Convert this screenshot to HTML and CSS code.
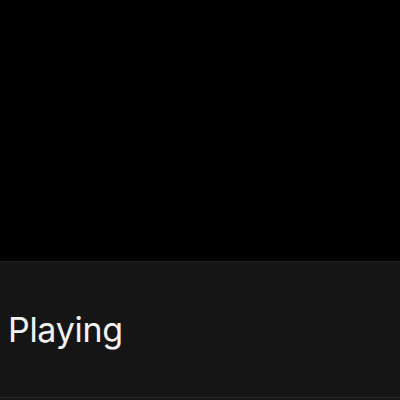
FILE: index.html
```html
<!DOCTYPE html>
<html lang="en">

<head>
    <meta charset="UTF-8">
    <meta name="viewport" content="width=device-width, initial-scale=1.0">
    <title>Now Playing</title>
    <link rel="stylesheet" href="styles.css">
</head>

<body>
    <div class="screen">
        <div class="video"></div>
        <div class="panel">
            <h1 class="status">Playing</h1>
        </div>
        <div class="footer"></div>
    </div>
</body>

</html>
```

FILE: styles.css
```css
/* Player screen */
body {
    margin: 0;
    background: #000;
    font-family: Inter, "Noto Sans", sans-serif;
}

.screen {
    width: 400px;
    height: 400px;
    display: flex;
    flex-direction: column;
}

.video {
    height: 261px;
    background: #000;
    border-bottom: 1px solid #1c1c1c;
}

.panel {
    flex: 1;
    background: #151515;
    display: flex;
    align-items: center;
    padding: 0 8px;
    border-bottom: 1px solid #2a2a2a;
}

.status {
    margin: 0;
    color: #f2f2f2;
    font-size: 34px;
    font-weight: 400;
    letter-spacing: -0.3px;
}

.footer {
    height: 2px;
    background: #151515;
}
```
